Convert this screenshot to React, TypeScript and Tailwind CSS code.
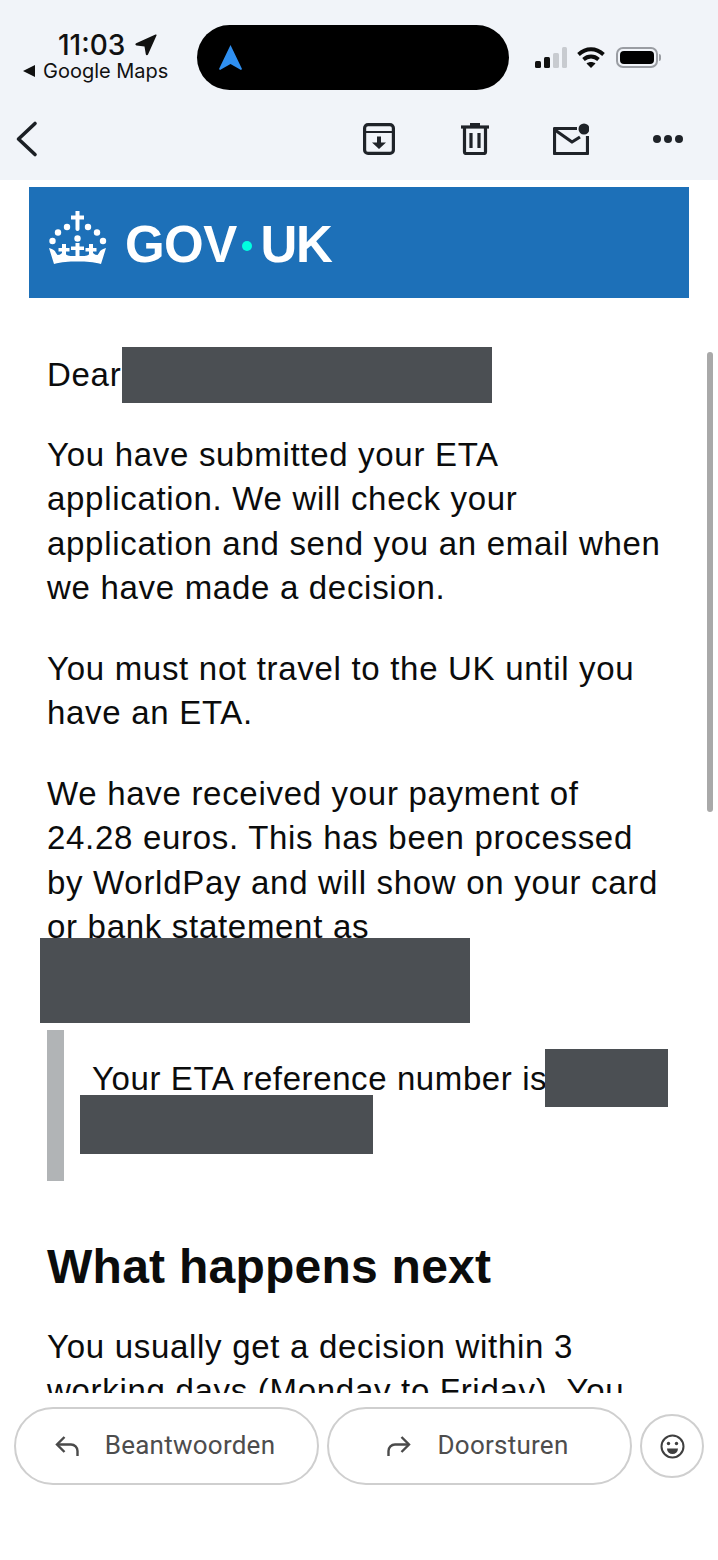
import React from 'react';

const Redact = ({ className }: { className: string }) => (
  <div className={`absolute bg-[#4b4f53] ${className}`} />
);

const Crown = () => (
  <svg width="58" height="54" viewBox="10 10 58 54" fill="#fff" className="mb-[10px]">
    {/* top cross */}
    <path d="M36.500 10h4v4.500H45v4h-4.500V28c0 1-.8 2-2 2s-2-1-2-2v-9.500H32v-4h4.500z" />
    <circle cx="28" cy="26" r="3.200" />
    <circle cx="49" cy="26" r="3.200" />
    <circle cx="19" cy="31.500" r="3.200" />
    <circle cx="58" cy="31.500" r="3.200" />
    <circle cx="13.500" cy="40" r="3.200" />
    <circle cx="64" cy="40" r="3.200" />
    <circle cx="38.500" cy="37.500" r="3.200" />
    {/* small crosses */}
    <path d="M36.500 42h4v3.500H45v3.500h-4.500V56h-4v-7h-4.500v-3.500h4.500z" />
    <path d="M23 43h4v4h3.500v3.500H27V56h-4v-5.500h-3.500V47H23z" />
    <path d="M50 43h4v4h3.500v3.500H54V56h-4v-5.500h-3.500V47H50z" />
    {/* band */}
    <path d="M10 47c3 1 6 2 7 5l1.500 2c3 0 5-2 6-5 1 3 3 6 7 6h14c4 0 6-3 7-6 1 3 3 5 6 5l1.500-2c1-3 4-4 7-5l-5 16c-8-2-14-2.500-23.500-2.500S23 61 15 63z" />
  </svg>
);

const Archive = () => (
  <svg width="32" height="32" viewBox="0 0 32 32" fill="none" stroke="#1f2329" strokeWidth="3.200">
    <rect x="1.600" y="1.600" width="28.800" height="28.800" rx="3.500" />
    <path d="M2 9h28" strokeWidth="2" />
    <path d="M14 13.500h4v6h5L16 26l-7-6.500h5z" fill="#1f2329" stroke="none" />
  </svg>
);

const Trash = () => (
  <svg width="28" height="32" viewBox="0 0 28 32" fill="none" stroke="#1f2329" strokeWidth="3.200">
    <path d="M0 4h28" />
    <path d="M9 1.500h10" />
    <path d="M3.500 4v25a1.500 1.500 0 0 0 1.500 1.500h18a1.500 1.500 0 0 0 1.500-1.500V4" />
    <path d="M10 10v15M18 10v15" />
  </svg>
);

const MailDot = () => (
  <svg width="36" height="32" viewBox="0 0 36 32" fill="none" stroke="#1f2329" strokeWidth="3.200" strokeLinejoin="round">
    <path d="M24 5.500H1.500v25h33V13" />
    <path d="M2 7l17 12 8-5" />
    <circle cx="31" cy="6" r="5.500" fill="#1f2329" stroke="none" />
  </svg>
);

const Signal = () => (
  <div className="flex items-end gap-[3px]">
    <div className="w-[6px] h-[7px] rounded-[1.5px] bg-[#111]" />
    <div className="w-[6px] h-[11px] rounded-[1.5px] bg-[#111]" />
    <div className="w-[6px] h-[15px] rounded-[1.5px] bg-[#c8cbd0]" />
    <div className="w-[5px] h-[21px] rounded-[1.5px] bg-[#c8cbd0]" />
  </div>
);

const Wifi = () => (
  <svg width="28" height="21" viewBox="0 0 28 21" fill="none" stroke="#0c0c0c" strokeWidth="3.800">
    <path d="M1.500 7.500C9 .5 19 .5 26.500 7.500" />
    <path d="M6.500 12.500c4.500-4 10.500-4 15 0" />
    <path d="M14 21l-4.500-4.500c2.500-2 6.500-2 9 0z" fill="#0c0c0c" stroke="none" />
  </svg>
);

const Battery = () => (
  <div className="flex items-center gap-[1px]">
    <div className="w-[42px] h-[21px] rounded-[7px] border-2 border-[#9a9da3] p-[2px]">
      <div className="w-full h-full rounded-[4px] bg-black" />
    </div>
    <div className="w-[2px] h-[7px] rounded-r bg-[#9a9da3]" />
  </div>
);

const ActionBtn = ({ label, flip }: { label: string; flip?: boolean }) => (
  <button className="w-[305px] h-[78px] rounded-full border-2 border-[#cfcfcf] flex items-center justify-center gap-[26px] pr-[3px] bg-white">
    <svg width="24" height="22" viewBox="0 0 24 22" fill="none" stroke="#4a4a4a" strokeWidth="2.400" className={flip ? '-scale-x-100' : ''}>
      <path d="M9.500 2L2 9.500 9.500 17" />
      <path d="M3 9.500h13a6.500 6.500 0 0 1 6.500 6.500v5" />
    </svg>
    <span className="text-[26px] tracking-[0.25px] leading-[30px] pb-[2px] text-[#4d4d4d] font-['Roboto',sans-serif]">{label}</span>
  </button>
);

export default function App() {
  return (
    <div className="relative w-[718px] h-[1560px] bg-white overflow-hidden flex flex-col font-['Liberation_Sans',Arial,sans-serif]">
      {/* top bar */}
      <header className="h-[180px] bg-[#f1f4f9] shrink-0 flex flex-col">
        <div className="flex items-center pt-[25px] h-[90px]">
          <div className="w-[197px] flex flex-col -mt-[2px]">
            <div className="flex items-center h-[30px] pl-[58px]">
              <span className="text-[28px] font-medium text-[#111] font-['Inter',sans-serif] leading-none">11:03</span>
              <svg width="22" height="22" viewBox="0 0 22 22" fill="#111" className="ml-[10px]"><path d="M20.500.5c.7-.3 1.300.3 1 1L13 20.500c-.5 1.200-2 1-2.200-.3L9.500 12.500 1.500 11.500C.2 11.300 0 9.800 1.200 9.300z" /></svg>
            </div>
            <div className="flex items-center h-[24px] pl-[23px] -mt-[1px]">
              <span className="w-0 h-0 border-y-[6px] border-y-transparent border-r-[12px] border-r-[#111]" />
              <span className="ml-[8px] text-[20px] text-[#111] font-['Inter',sans-serif] leading-none">Google Maps</span>
            </div>
          </div>
          <div className="w-[312px] h-[65px] rounded-full bg-black flex items-center pl-[22px]">
            <svg width="23" height="25" viewBox="0 0 23 25" fill="#2f8ff0"><path d="M11.500 0L23 24l-1 1-10.500-6L1 25l-1-1z" /></svg>
          </div>
          <div className="flex items-center pl-[26px]">
            <Signal />
            <div className="ml-[10px]"><Wifi /></div>
            <div className="ml-[11px]"><Battery /></div>
          </div>
        </div>
        <div className="flex-1 flex items-center pl-[14px] pt-[8px]">
          <svg width="28" height="38" viewBox="0 0 28 38" fill="none" stroke="#1b1f24" strokeWidth="3.600" strokeLinecap="round" strokeLinejoin="round">
            <path d="M21 3.500L4.500 19 21 34.500" />
          </svg>
          <div className="ml-auto flex items-center pr-[35px]">
            <Archive />
            <div className="ml-[66px]"><Trash /></div>
            <div className="ml-[64px]"><MailDot /></div>
            <div className="ml-[64px] flex gap-[3px]">
              <span className="w-[8px] h-[8px] rounded-full bg-[#1f2329]" />
              <span className="w-[8px] h-[8px] rounded-full bg-[#1f2329]" />
              <span className="w-[8px] h-[8px] rounded-full bg-[#1f2329]" />
            </div>
          </div>
        </div>
      </header>

      {/* email body */}
      <main className="relative h-[1213px] shrink-0 overflow-hidden pt-[7px]">
        <div className="mx-[29px] h-[111px] bg-[#1d70b8] flex items-center pl-[20px]">
          <Crown />
          <span className="ml-[18px] pt-[3px] text-[51px] font-bold text-white leading-none tracking-[-0.6px]">GOV</span>
          <span className="ml-[5px] mr-[9px] mt-[7px] w-[10px] h-[10px] rounded-full bg-[#00ffe0]" />
          <span className="pt-[3px] text-[51px] font-bold text-white leading-none tracking-[-1.5px]">UK</span>
        </div>

        <div className="relative pl-[47px] pr-[40px] pt-[55px] text-[33px] leading-[44.500px] tracking-[0.7px] text-[#0b0c0c]">
          <p>Dear</p>
          <Redact className="left-[122px] top-[49px] w-[370px] h-[56px]" />
          <p className="mt-[35px]">You have submitted your ETA<br />application. We will check your<br />application and send you an email when<br />we have made a decision.</p>
          <p className="mt-[36px]">You must not travel to the UK until you<br />have an ETA.</p>
          <p className="mt-[36px]">We have received your payment of<br />24.28 euros. This has been processed<br />by WorldPay and will show on your card<br />or bank statement as</p>
          <Redact className="left-[40px] top-[640px] w-[430px] h-[85px]" />

          <div className="mt-[80px] flex h-[151px]">
            <div className="w-[17px] bg-[#b1b4b6]" />
            <div className="relative flex-1 pl-[28px] pt-[27px]">
              <p className="tracking-[0.6px]">Your ETA reference number is</p>
              <Redact className="left-[481px] top-[19px] w-[123px] h-[58px]" />
              <Redact className="left-[16px] top-[65px] w-[293px] h-[59px]" />
            </div>
          </div>

          <h2 className="mt-[58px] text-[48px] font-bold leading-[56px] tracking-[0.25px]">What happens next</h2>
          <p className="mt-[30px]">You usually get a decision within 3<br />working days (Monday to Friday). You</p>
        </div>

        {/* scrollbar */}
        <div className="absolute left-[707px] top-[172px] w-[6px] h-[460px] rounded-full bg-[#a9a9a9]" />
      </main>

      {/* reply bar */}
      <footer className="flex-1 bg-white flex pt-[14px] pl-[14px] gap-[8px]">
        <ActionBtn label="Beantwoorden" />
        <ActionBtn label="Doorsturen" flip />
        <button className="mt-[7px] w-[64px] h-[64px] rounded-full border-2 border-[#cfcfcf] flex items-center justify-center">
          <svg width="25" height="25" viewBox="0 0 25 25" fill="none" stroke="#3f3f3f" strokeWidth="2">
            <circle cx="12.500" cy="12.500" r="11" />
            <circle cx="8.500" cy="9.500" r="1.700" fill="#3f3f3f" stroke="none" />
            <circle cx="16.500" cy="9.500" r="1.700" fill="#3f3f3f" stroke="none" />
            <path d="M7 14.500h11a5.500 5.500 0 0 1-11 0z" fill="#3f3f3f" stroke="none" />
          </svg>
        </button>
      </footer>
    </div>
  );
}
